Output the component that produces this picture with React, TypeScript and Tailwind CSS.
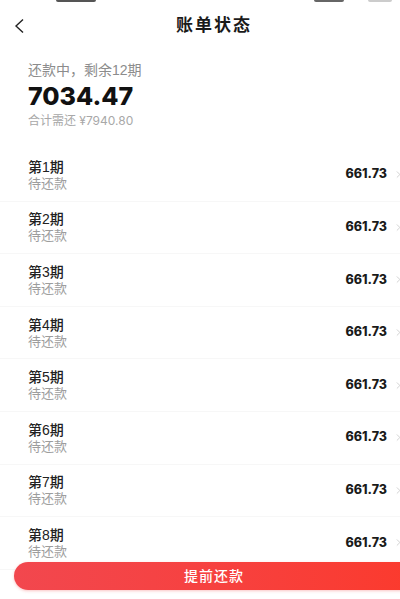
import { ChevronRight } from 'lucide-react'

const periods = [1, 2, 3, 4, 5, 6, 7, 8]

const cjk = { fontFamily: '"Liberation Sans", "Noto Sans CJK SC", sans-serif' }
const num = { fontFamily: 'Inter, "Noto Sans CJK SC", sans-serif' }

export default function App() {
  return (
    <div className="relative h-[599px] w-[400px] overflow-hidden bg-white" style={cjk}>
      {/* status bar, mostly scrolled out of view */}
      <div className="flex h-[4px] items-start overflow-hidden">
        <div className="ml-[56px] h-[2px] w-[40px] rounded-b-sm bg-[#555]" />
        <div className="ml-auto h-[2px] w-[30px] rounded-b-sm bg-[#666]" />
        <div className="ml-[24px] mr-[8px] h-[2px] w-[24px] rounded-b-sm bg-[#ccc]" />
      </div>

      {/* header */}
      <div className="relative flex h-[44px] items-center justify-center pl-[28px]">
        <svg
          className="absolute left-[13px] top-[14px]"
          width="12"
          height="16"
          viewBox="0 0 12 16"
          fill="none"
          stroke="#222"
          strokeWidth="1.4"
        >
          <path d="M10 1.5 L3 8 L10 14.5" />
        </svg>
        <h1 className="text-[17px] font-bold tracking-[2px] text-[#1a1a1a]">账单状态</h1>
      </div>

      {/* summary */}
      <div className="px-[28px] pt-[12px]">
        <p className="text-[14px] leading-[20px] text-[#8c8c8c]">还款中，剩余12期</p>
        <p className="text-[25px] font-extrabold leading-[32px] text-[#111]" style={num}>
          7034.47
        </p>
        <p className="text-[12px] leading-[18px] text-[#a8a8a8]">
          合计需还 <span style={num}>¥7940.80</span>
        </p>
      </div>

      {/* installments */}
      <div className="mt-[19px]">
        {periods.map((p) => (
          <div key={p} className="flex h-[52.6px] items-center border-b border-[#f7f7f7] pl-[28px]">
            <div className="flex flex-1 flex-col">
              <span className="text-[14px] font-medium leading-[18px] text-[#222]">第{p}期</span>
              <span className="text-[13px] leading-[16px] text-[#9d9d9d]">待还款</span>
            </div>
            <span className="text-[12.5px] font-extrabold text-[#1a1a1a]" style={num}>
              661.73
            </span>
            <ChevronRight size={11} strokeWidth={1.5} className="ml-[6px] mr-[-4px] text-[#bdbdbd]" />
          </div>
        ))}
      </div>

      {/* prepay button */}
      <button className="absolute left-[14px] right-[-14px] top-[562px] h-[28px] rounded-full bg-gradient-to-r from-[#f2474e] to-[#fb3a2d] text-[14px] font-medium tracking-[1px] text-white shadow-[0_1px_3px_rgba(240,60,60,0.3)]">
        提前还款
      </button>
    </div>
  )
}
